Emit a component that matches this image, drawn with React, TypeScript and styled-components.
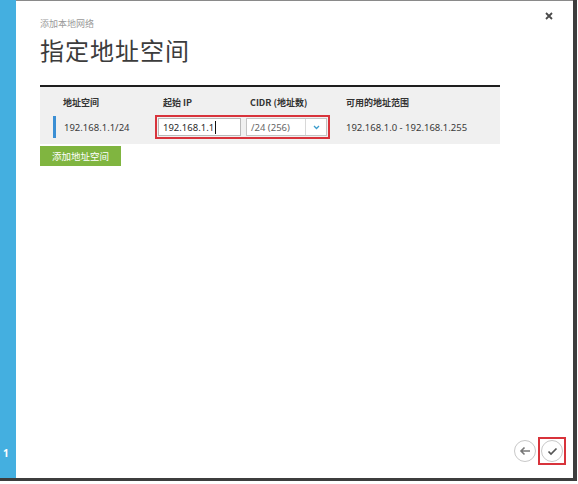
import styled, { createGlobalStyle } from "styled-components";

const GlobalStyle = createGlobalStyle`
  html, body {
    margin: 0;
    padding: 0;
    background: #fff;
  }
  body {
    font-family: "Noto Sans", "Noto Sans CJK SC", sans-serif;
  }
`;

const Page = styled.div`
  width: 578px;
  height: 484px;
  background: #fff;
  overflow: hidden;
`;

const Dialog = styled.div`
  display: flex;
  width: 573px;
  height: 478px;
  border-right: 4px solid #3d3d3d;
  border-bottom: 3px solid #3d3d3d;
`;

const Sidebar = styled.div`
  width: 16px;
  flex: none;
  background: #44afe0;
  display: flex;
  flex-direction: column;
  justify-content: flex-end;
  padding-bottom: 19px;
  box-sizing: border-box;
`;

const StepNumber = styled.div`
  color: #fff;
  font-weight: 700;
  font-size: 10px;
  line-height: 12px;
  padding-left: 3px;
`;

const Main = styled.div`
  position: relative;
  flex: 1;
  display: flex;
  flex-direction: column;
  border-top: 1px solid #8a8a8a;
  padding: 17px 7px 13px 24px;
  box-sizing: border-box;
`;

const CloseButton = styled.div`
  position: absolute;
  top: 10px;
  right: 19px;
  width: 10px;
  height: 10px;
  display: flex;
  align-items: center;
  justify-content: center;
`;

const Subtitle = styled.div`
  font-family: "Noto Sans CJK SC", sans-serif;
  font-size: 9px;
  line-height: 12px;
  color: #9a9a9a;
`;

const Title = styled.h1`
  margin: 5px 0 0;
  font-family: "Noto Sans CJK SC", sans-serif;
  font-weight: 400;
  font-size: 24px;
  line-height: 30px;
  color: #3c3c3c;
  letter-spacing: 1px;
`;

const Panel = styled.div`
  margin-top: 20px;
  width: 460px;
  height: 59px;
  background: #f0f0f0;
  border-top: 2px solid #1e1e1e;
  box-sizing: border-box;
`;

const HeaderRow = styled.div`
  display: flex;
  align-items: center;
  height: 24px;
  padding: 3px 0 0 23px;
`;

const HeaderCell = styled.div<{ $w?: number }>`
  width: ${(p) => (p.$w ? `${p.$w}px` : "auto")};
  flex: none;
  font-family: "Noto Sans CJK SC", sans-serif;
  font-weight: 700;
  font-size: 9px;
  color: #333;
`;

const DataRow = styled.div`
  display: flex;
  align-items: center;
  height: 26px;
  padding-left: 13px;
`;

const RowMarker = styled.div`
  width: 3px;
  height: 22px;
  background: #3b8fd4;
  margin-right: 8px;
`;

const CellText = styled.div<{ $w?: number }>`
  width: ${(p) => (p.$w ? `${p.$w}px` : "auto")};
  flex: none;
  font-size: 9.5px;
  color: #3a3a3a;
`;

const Highlight = styled.div`
  display: flex;
  align-items: center;
  gap: 5px;
  width: 175px;
  height: 24px;
  padding: 0 1px;
  border: 2px solid #d8333b;
  box-sizing: border-box;
  margin-right: 16px;
`;

const TextInput = styled.div`
  display: flex;
  align-items: center;
  width: 83px;
  height: 18px;
  background: #fff;
  border: 1px solid #b9b9b9;
  box-sizing: border-box;
  padding-left: 4px;
  font-size: 9.5px;
  color: #2a2a2a;
`;

const Caret = styled.span`
  display: inline-block;
  width: 1px;
  height: 13px;
  background: #111;
  margin-left: 1px;
`;

const Select = styled.div`
  display: flex;
  align-items: center;
  flex: 1;
  height: 18px;
  background: #fff;
  border: 1px solid #c4c4c4;
  box-sizing: border-box;
  font-size: 9.5px;
  color: #666;
`;

const SelectValue = styled.div`
  flex: 1;
  padding-left: 4px;
`;

const SelectArrow = styled.div`
  width: 20px;
  height: 100%;
  border-left: 1px solid #d8d8d8;
  display: flex;
  align-items: center;
  justify-content: center;
`;

const AddButton = styled.button`
  margin-top: 2px;
  align-self: flex-start;
  width: 81px;
  height: 20px;
  border: none;
  padding: 0;
  background: #80b540;
  color: #fff;
  font-family: "Noto Sans CJK SC", sans-serif;
  font-size: 9.5px;
`;

const Footer = styled.div`
  margin-top: auto;
  display: flex;
  justify-content: flex-end;
  align-items: center;
  gap: 2px;
`;

const CircleButton = styled.div`
  width: 22px;
  height: 22px;
  border-radius: 50%;
  border: 1.5px solid #c8c8c8;
  box-sizing: border-box;
  display: flex;
  align-items: center;
  justify-content: center;
  background: #fff;
`;

const ConfirmFrame = styled.div`
  width: 28px;
  height: 28px;
  border: 2px solid #d8333b;
  box-sizing: border-box;
  display: flex;
  align-items: center;
  justify-content: center;
`;

export default function App() {
  return (
    <Page>
      <GlobalStyle />
      <Dialog>
        <Sidebar>
          <StepNumber>1</StepNumber>
        </Sidebar>
        <Main>
          <CloseButton>
            <svg width="8" height="8" viewBox="0 0 8 8">
              <path d="M1 1L7 7M7 1L1 7" stroke="#4a4a4a" strokeWidth="1.8" />
            </svg>
          </CloseButton>
          <Subtitle>添加本地网络</Subtitle>
          <Title>指定地址空间</Title>
          <Panel>
            <HeaderRow>
              <HeaderCell $w={100}>地址空间</HeaderCell>
              <HeaderCell $w={87}>起始 IP</HeaderCell>
              <HeaderCell $w={96}>CIDR (地址数)</HeaderCell>
              <HeaderCell>可用的地址范围</HeaderCell>
            </HeaderRow>
            <DataRow>
              <RowMarker />
              <CellText $w={91}>192.168.1.1/24</CellText>
              <Highlight>
                <TextInput>
                  192.168.1.1
                  <Caret />
                </TextInput>
                <Select>
                  <SelectValue>/24 (256)</SelectValue>
                  <SelectArrow>
                    <svg width="7" height="5" viewBox="0 0 7 5">
                      <path d="M1 1L3.5 3.5L6 1" stroke="#3b9ccc" strokeWidth="1.3" fill="none" />
                    </svg>
                  </SelectArrow>
                </Select>
              </Highlight>
              <CellText>192.168.1.0 - 192.168.1.255</CellText>
            </DataRow>
          </Panel>
          <AddButton>添加地址空间</AddButton>
          <Footer>
            <CircleButton>
              <svg width="12" height="10" viewBox="0 0 12 10">
                <path d="M11 5H2M5.5 1.5L2 5L5.5 8.5" stroke="#777" strokeWidth="1.6" fill="none" />
              </svg>
            </CircleButton>
            <ConfirmFrame>
              <CircleButton>
                <svg width="11" height="9" viewBox="0 0 11 9">
                  <path d="M1.5 4.5L4 7L9.5 1.5" stroke="#555" strokeWidth="1.7" fill="none" />
                </svg>
              </CircleButton>
            </ConfirmFrame>
          </Footer>
        </Main>
      </Dialog>
    </Page>
  );
}
